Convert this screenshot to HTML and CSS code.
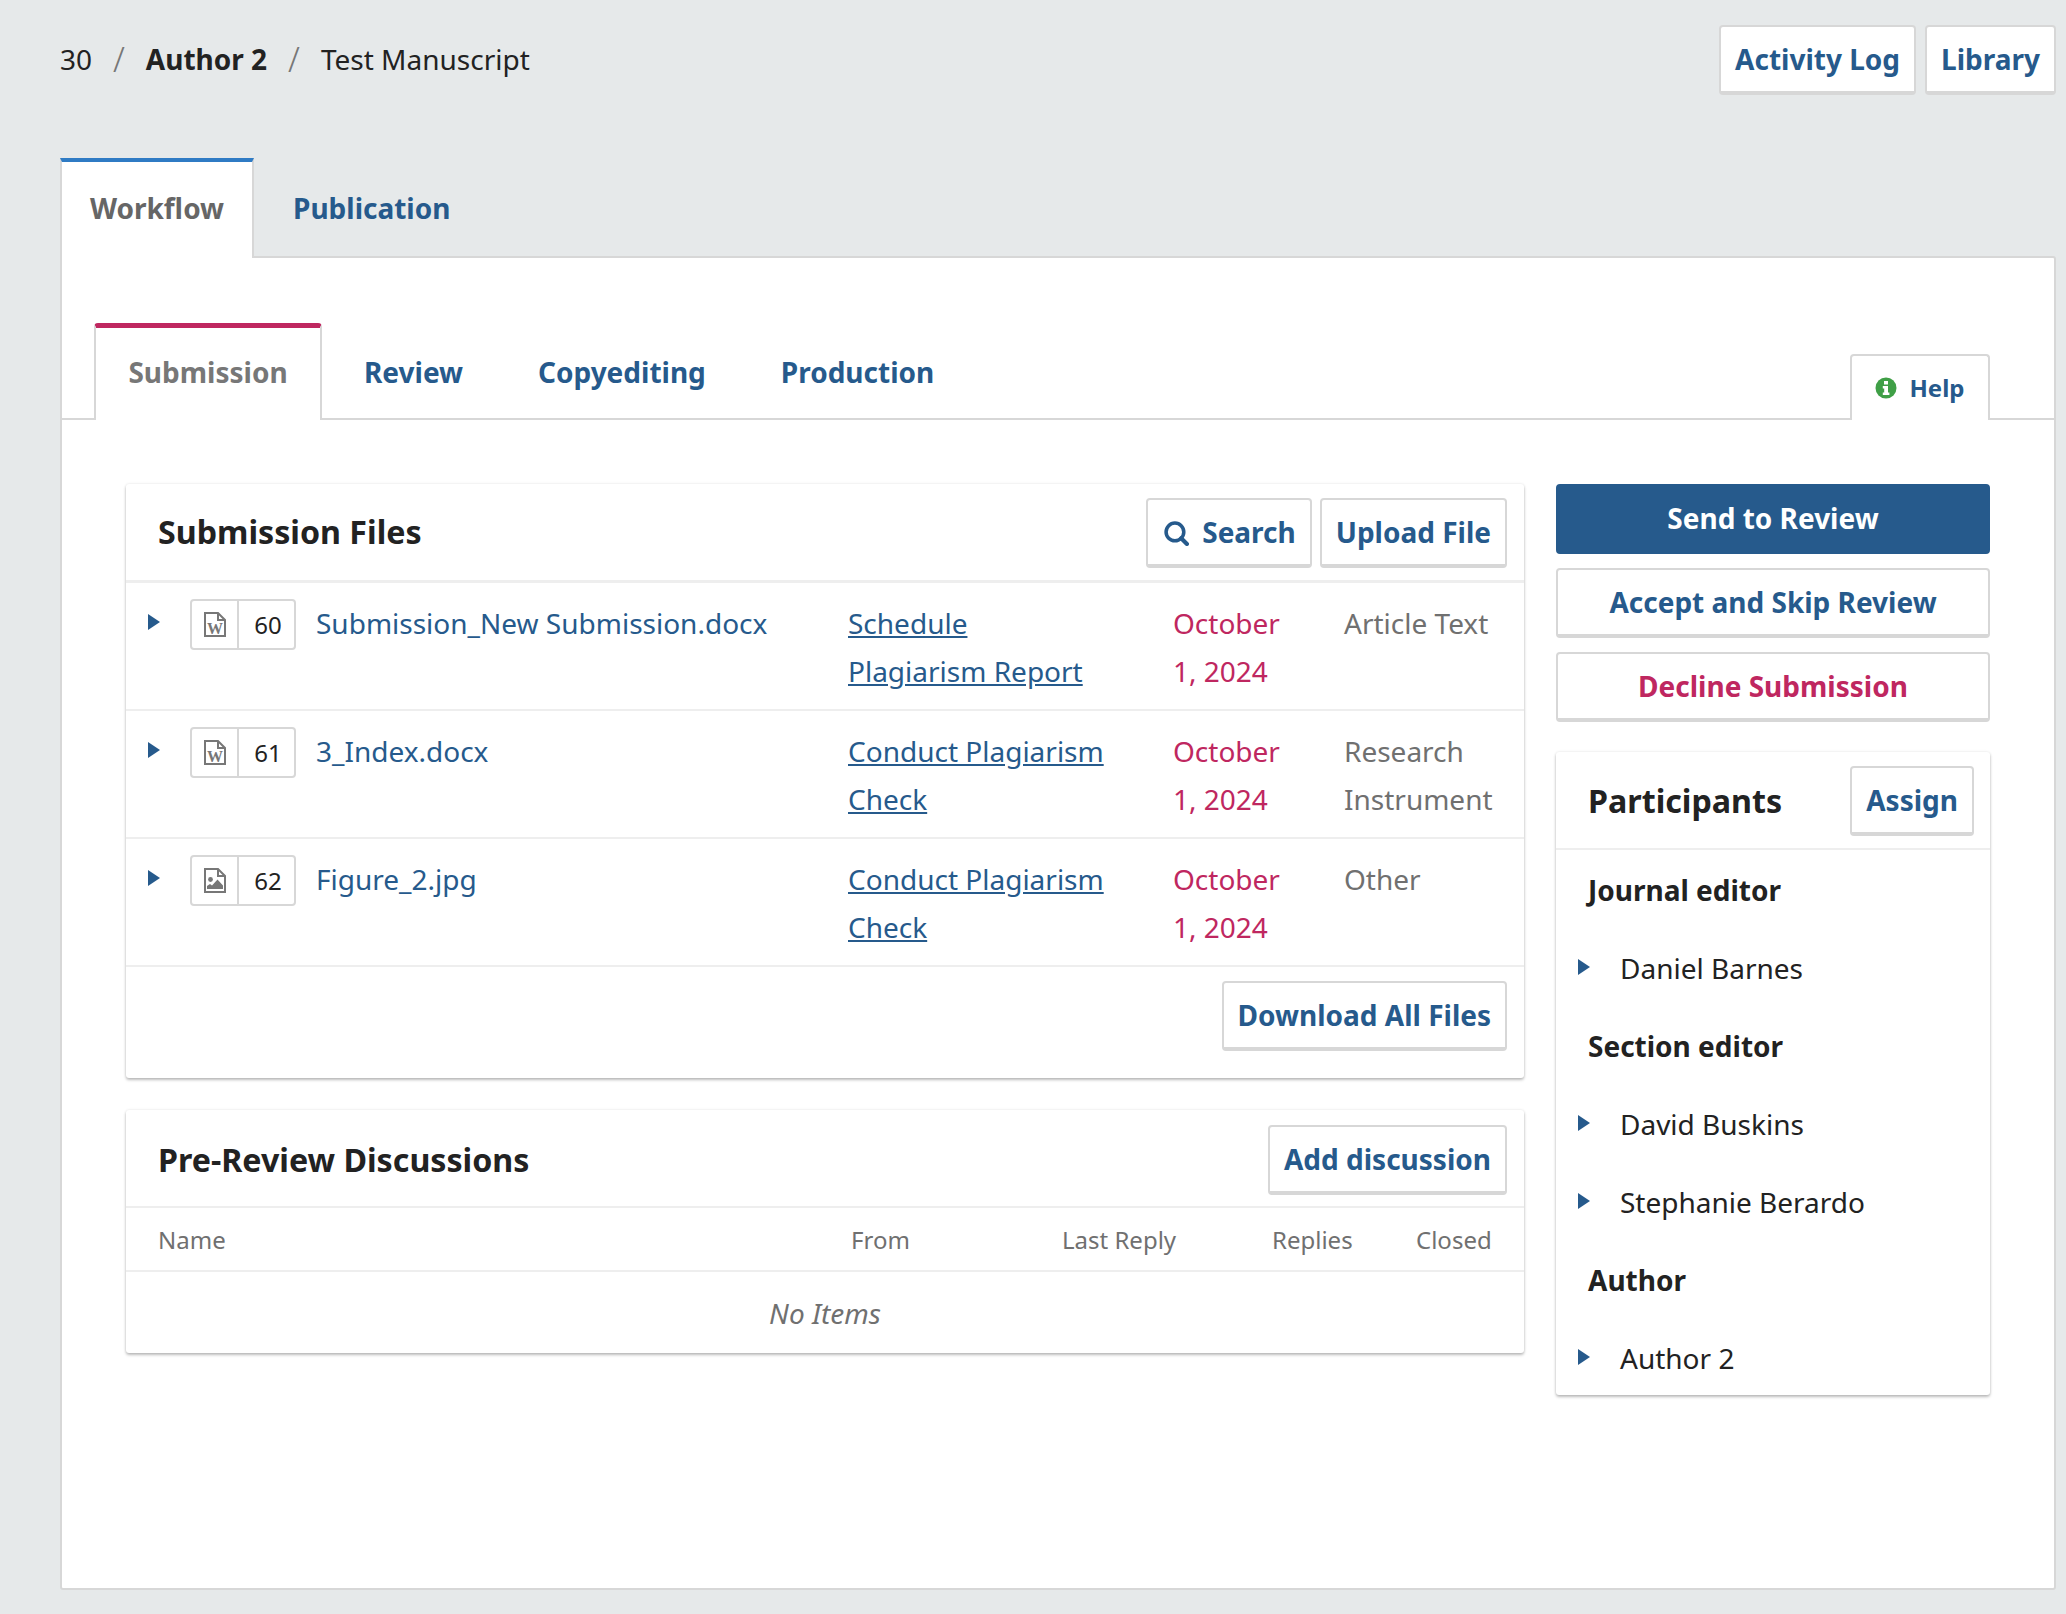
FILE: index.html
```html
<!DOCTYPE html>
<html lang="en">
<head>
    <meta charset="UTF-8">
    <title>Test Manuscript</title>
    <link rel="stylesheet" href="styles.css">
</head>
<body>
<div class="page">
    <div class="top">
        <div class="crumbs">
            <span>30</span><span class="sep">/</span><b>Author 2</b><span class="sep">/</span><span>Test Manuscript</span>
        </div>
        <div class="top-btns">
            <a class="btn">Activity Log</a>
            <a class="btn">Library</a>
        </div>
    </div>

    <div class="pub-tabs">
        <a class="pub-tab selected">Workflow</a>
        <a class="pub-tab">Publication</a>
    </div>

    <div class="panel">
        <div class="stage-tabs">
            <a class="stage-tab selected">Submission</a>
            <a class="stage-tab">Review</a>
            <a class="stage-tab">Copyediting</a>
            <a class="stage-tab">Production</a>
            <a class="help">
                <svg class="help-icon" viewBox="0 0 22 22"><circle cx="11" cy="11" r="10.5" fill="#3f9f46"/><path fill="#fff" d="M9 4h4v3.4H9zM7.800 9h5.200v6.400h1.400V18H7.800v-2.600h1.400v-3.800H7.800z"/></svg>
                Help
            </a>
        </div>

        <div class="stage-body">
            <div class="main">
                <div class="card">
                    <div class="card-head thick">
                        <h2>Submission Files</h2>
                        <div class="card-btns">
                            <a class="btn">
                                <svg class="search-icon" viewBox="0 0 24 24"><circle cx="10.500" cy="10.500" r="8.500" fill="none" stroke="#265a8c" stroke-width="3.400"/><path d="M16.500 16.500l5.500 5.500" stroke="#265a8c" stroke-width="4" stroke-linecap="round"/></svg>
                                Search
                            </a>
                            <a class="btn">Upload File</a>
                        </div>
                    </div>

                    <div class="file-row">
                        <span class="arrow"></span>
                        <span class="badge">
                            <span class="badge-icon">
                                <svg viewBox="0 0 22 25"><path fill="none" stroke="#777" stroke-width="2" d="M1 1h13l7 7v16H1zM14 1v7h7"/><text x="11" y="21.500" text-anchor="middle" class="doc-w">W</text></svg>
                            </span>
                            <span class="badge-num">60</span>
                        </span>
                        <a class="file-name">Submission_New Submission.docx</a>
                        <a class="file-link">Schedule Plagiarism Report</a>
                        <span class="file-date">October 1, 2024</span>
                        <span class="file-type">Article Text</span>
                    </div>
                    <div class="file-row">
                        <span class="arrow"></span>
                        <span class="badge">
                            <span class="badge-icon">
                                <svg viewBox="0 0 22 25"><path fill="none" stroke="#777" stroke-width="2" d="M1 1h13l7 7v16H1zM14 1v7h7"/><text x="11" y="21.500" text-anchor="middle" class="doc-w">W</text></svg>
                            </span>
                            <span class="badge-num">61</span>
                        </span>
                        <a class="file-name">3_Index.docx</a>
                        <a class="file-link">Conduct Plagiarism Check</a>
                        <span class="file-date">October 1, 2024</span>
                        <span class="file-type">Research Instrument</span>
                    </div>
                    <div class="file-row">
                        <span class="arrow"></span>
                        <span class="badge">
                            <span class="badge-icon">
                                <svg viewBox="0 0 22 25"><path fill="none" stroke="#777" stroke-width="2" d="M1 1h13l7 7v16H1zM14 1v7h7"/><circle cx="6.500" cy="11.500" r="2.400" fill="#777"/><path fill="#777" d="M3 21v-3l3-2 2 1.500 5.500-6 5.500 6V21z"/></svg>
                            </span>
                            <span class="badge-num">62</span>
                        </span>
                        <a class="file-name">Figure_2.jpg</a>
                        <a class="file-link">Conduct Plagiarism Check</a>
                        <span class="file-date">October 1, 2024</span>
                        <span class="file-type">Other</span>
                    </div>
                    <div class="card-foot">
                        <a class="btn">Download All Files</a>
                    </div>
                </div>

                <div class="card">
                    <div class="card-head">
                        <h2>Pre-Review Discussions</h2>
                        <div class="card-btns">
                            <a class="btn">Add discussion</a>
                        </div>
                    </div>
                    <div class="disc-cols">
                        <span>Name</span>
                        <span>From</span>
                        <span>Last Reply</span>
                        <span>Replies</span>
                        <span>Closed</span>
                    </div>
                    <div class="no-items">No Items</div>
                </div>
            </div>

            <div class="side">
                <a class="action primary">Send to Review</a>
                <a class="action">Accept and Skip Review</a>
                <a class="action danger">Decline Submission</a>

                <div class="card people">
                    <div class="people-head">
                        <h2>Participants</h2>
                        <a class="btn">Assign</a>
                    </div>
                    <div class="role">Journal editor</div>
                    <div class="person"><span class="arrow"></span>Daniel Barnes</div>
                    <div class="role">Section editor</div>
                    <div class="person"><span class="arrow"></span>David Buskins</div>
                    <div class="person"><span class="arrow"></span>Stephanie Berardo</div>
                    <div class="role">Author</div>
                    <div class="person"><span class="arrow"></span>Author 2</div>
                </div>
            </div>
        </div>
    </div>
</div>
</body>
</html>
```
FILE: styles.css
```css
*{
    box-sizing: border-box;
    padding: 0;
    margin: 0;
}
body{
    background: #e6e9ea;
    color: #222;
    font-family: "Noto Sans", "Open Sans", sans-serif;
    font-size: 28px;
    line-height: 48px;
}
.page{
    height: 1614px;
    padding: 24px 10px 0 60px;
}
.top{
    display: flex;
    justify-content: space-between;
    align-items: center;
    height: 72px;
}
.crumbs{
    display: flex;
    align-items: center;
    margin-bottom: 2px;
}
.crumbs .sep{
    color: #777;
    font-size: 34px;
    font-weight: 300;
    margin: 0 21px;
}
.crumbs b{
    font-weight: 700;
}
.top-btns{
    display: flex;
    gap: 9px;
}
.btn{
    display: inline-flex;
    align-items: center;
    height: 70px;
    padding: 0 14px;
    background: #fff;
    border: 2px solid #d7d7d7;
    border-bottom-width: 4px;
    border-radius: 4px;
    color: #265a8c;
    font-size: 28px;
    font-weight: 700;
    white-space: nowrap;
}
.search-icon{
    width: 25px;
    height: 25px;
    margin: 2px 13px 0 2px;
}

.pub-tabs{
    display: flex;
    margin-top: 62px;
    margin-bottom: -2px;
}
.pub-tab{
    height: 100px;
    padding: 0 39px;
    font-size: 28px;
    font-weight: 700;
    line-height: 100px;
    color: #265a8c;
}
.pub-tab.selected{
    position: relative;
    z-index: 1;
    width: 194px;
    padding: 0;
    text-align: center;
    background: #fff;
    color: #666;
    border-top: 4px solid #2f7bc4;
    border-right: 2px solid #d7d7d7;
    border-left: 2px solid #d7d7d7;
    line-height: 92px;
}
.panel{
    height: 1334px;
    background: #fff;
    border: 2px solid #d7d7d7;
    border-radius: 0 3px 3px 3px;
}
.stage-tabs{
    display: flex;
    align-items: flex-end;
    height: 162px;
    padding: 64px 64px 0 32px;
    border-bottom: 2px solid #d7d7d7;
}
.stage-tab{
    height: 97px;
    margin-bottom: -2px;
    margin-right: 75px;
    font-size: 28px;
    font-weight: 700;
    line-height: 98px;
    color: #265a8c;
}
.stage-tab.selected{
    width: 228px;
    margin-right: 42px;
    text-align: center;
    background: #fff;
    color: #777;
    border: 2px solid #d7d7d7;
    border-top: 5px solid #bf2760;
    border-bottom: 0;
    border-radius: 4px 4px 0 0;
    line-height: 88px;
}
.help{
    display: flex;
    align-items: center;
    justify-content: center;
    gap: 12px;
    width: 140px;
    height: 66px;
    margin-left: auto;
    margin-bottom: -2px;
    background: #fff;
    border: 2px solid #d7d7d7;
    border-bottom: 0;
    border-radius: 4px 4px 0 0;
    font-size: 24px;
    font-weight: 700;
    color: #265a8c;
}
.help-icon{
    width: 22px;
    height: 22px;
}

.stage-body{
    display: flex;
    gap: 32px;
    padding: 64px 64px 0 64px;
}
.main{
    display: flex;
    flex-direction: column;
    gap: 32px;
    width: 1398px;
}
.side{
    display: flex;
    flex-direction: column;
    width: 434px;
}
.card{
    background: #fff;
    border-radius: 3px;
    box-shadow: 0 0 3px rgba(0,0,0,.1), 0 2px 3px rgba(0,0,0,.25);
}
.card-head{
    display: flex;
    justify-content: space-between;
    align-items: center;
    height: 98px;
    padding: 3px 17px 0 32px;
    border-bottom: 2px solid #eee;
}
.card-head.thick{
    height: 99px;
    padding-top: 2px;
    border-bottom-width: 3px;
}
.card-head.thick h2{
    margin-bottom: 2px;
}
h2{
    font-size: 32.2px;
    font-weight: 700;
    color: #222;
}
.card-btns{
    display: flex;
    gap: 8px;
}
.file-row{
    display: grid;
    grid-template-columns: 64px 126px 532px 325px 171px 1fr;
    align-items: start;
    height: 128px;
    padding-top: 16px;
    border-bottom: 2px solid #eee;
    color: #707070;
}
.arrow{
    display: block;
    width: 0;
    height: 0;
    border-top: 8px solid transparent;
    border-bottom: 8px solid transparent;
    border-left: 12px solid #265a8c;
}
.file-row .arrow{
    margin: 15px 0 0 22px;
}
.badge{
    display: flex;
    width: 106px;
    height: 51px;
    border: 2px solid #d7d7d7;
    border-radius: 4px;
    color: #222;
    font-size: 24px;
    line-height: 47px;
}
.badge-icon{
    display: flex;
    align-items: center;
    justify-content: center;
    width: 47px;
    border-right: 2px solid #d7d7d7;
}
.badge-icon svg{
    width: 22px;
    height: 25px;
}
.doc-w{
    fill: #777;
    font-family: "Liberation Serif", serif;
    font-size: 16px;
    font-weight: 700;
}
.badge-num{
    flex: 1;
    padding-left: 3px;
    text-align: center;
}
.file-name{
    color: #265a8c;
}
.file-link{
    padding-right: 65px;
    color: #265a8c;
    text-decoration: underline;
}
.file-date{
    padding-right: 40px;
    color: #bf2760;
}
.card-foot{
    display: flex;
    justify-content: flex-end;
    height: 111px;
    padding: 14px 17px 0 0;
}
.disc-cols{
    display: grid;
    grid-template-columns: 693px 211px 210px 144px 1fr;
    height: 64px;
    padding-left: 32px;
    border-bottom: 2px solid #eee;
    color: #707070;
    font-size: 24px;
    line-height: 64px;
}
.no-items{
    height: 81px;
    text-align: center;
    color: #707070;
    font-style: italic;
    line-height: 82px;
}

.action{
    display: block;
    height: 70px;
    margin-bottom: 14px;
    background: #fff;
    border: 2px solid #d7d7d7;
    border-bottom-width: 4px;
    border-radius: 4px;
    text-align: center;
    color: #265a8c;
    font-size: 28px;
    font-weight: 700;
    line-height: 64px;
}
.action.primary{
    background: #265a8c;
    border-color: #265a8c;
    color: #fff;
}
.action.danger{
    color: #bf2760;
}
.people{
    height: 643px;
    margin-top: 16px;
}
.people-head{
    display: flex;
    justify-content: space-between;
    align-items: center;
    height: 98px;
    padding: 2px 16px 0 32px;
    border-bottom: 2px solid #eee;
}
.role{
    height: 78px;
    padding-left: 32px;
    font-weight: 700;
    line-height: 80px;
}
.person{
    display: flex;
    height: 78px;
    padding-left: 22px;
    line-height: 80px;
    color: #222;
}
.person .arrow{
    margin: 31px 30px 0 0;
}
```
